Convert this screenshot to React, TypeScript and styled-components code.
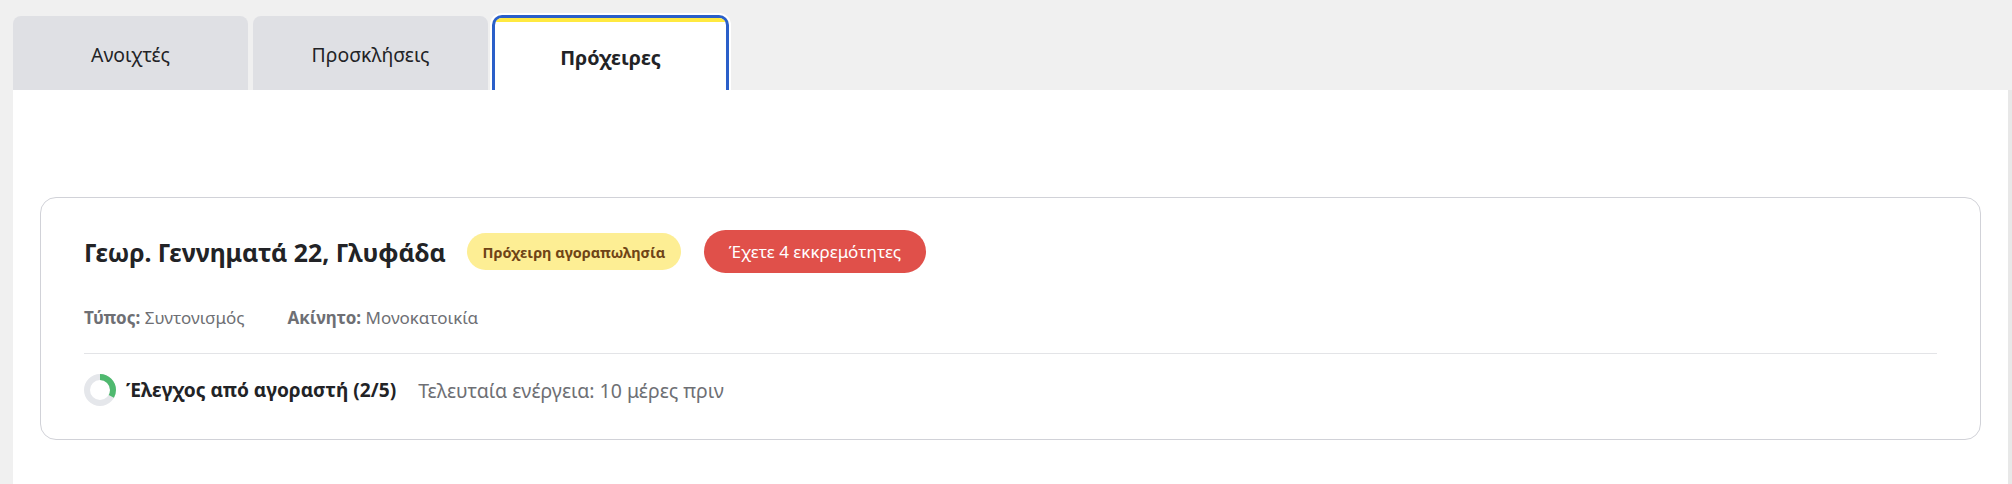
import React from 'react';
import styled, { createGlobalStyle } from 'styled-components';

const GlobalStyle = createGlobalStyle`
  html, body {
    margin: 0;
    padding: 0;
    background: #f0f0f0;
    font-family: "Noto Sans", "Open Sans", sans-serif;
    overflow: hidden;
  }
`;

const Page = styled.div`
  width: 2012px;
  height: 484px;
  padding-top: 16px;
  box-sizing: border-box;
  display: flex;
  flex-direction: column;
`;

const TabRow = styled.div`
  display: flex;
  align-items: flex-end;
  height: 74px;
  padding-left: 13px;
  gap: 5px;
`;

const Tab = styled.div<{ $active?: boolean }>`
  box-sizing: border-box;
  width: ${({ $active }) => ($active ? '237px' : '235px')};
  height: ${({ $active }) => ($active ? '75px' : '74px')};
  margin-left: ${({ $active }) => ($active ? '-1px' : '0')};
  display: flex;
  align-items: center;
  justify-content: center;
  border-radius: ${({ $active }) => ($active ? '10px 10px 0 0' : '8px 8px 0 0')};
  background: ${({ $active }) => ($active ? '#fff' : '#dfe0e4')};
  color: #222326;
  font-size: ${({ $active }) => ($active ? '19.7px' : '19.4px')};
  font-weight: ${({ $active }) => ($active ? 700 : 400)};
  border: ${({ $active }) => ($active ? '3px solid #2a5fc9' : 'none')};
  border-bottom: none;
  box-shadow: ${({ $active }) => ($active ? '0 0 0 2px #fff' : 'none')};
  position: relative;
  padding-top: ${({ $active }) => ($active ? '6px' : '2px')};
  overflow: hidden;
`;

const TabStripe = styled.span`
  position: absolute;
  top: 0;
  left: 0;
  right: 0;
  height: 4px;
  background: #ffe940;
`;

const Panel = styled.main`
  flex: 1;
  margin: 0 4px 0 13px;
  background: #fff;
  padding: 107px 27px 0;
  position: relative;
  box-shadow: 4px 0 0 #e8e8e8;
`;

const Card = styled.section`
  box-sizing: border-box;
  height: 243px;
  border: 1px solid #d1d2d8;
  border-radius: 16px;
  padding: 32px 43px 0 43px;
`;

const HeaderRow = styled.div`
  display: flex;
  align-items: center;
  height: 43px;
`;

const Title = styled.h2`
  margin: 0;
  font-size: 24.8px;
  line-height: 32px;
  font-weight: 700;
  color: #222326;
`;

const DraftBadge = styled.span`
  margin-left: 21px;
  height: 37px;
  width: 214px;
  display: flex;
  align-items: center;
  justify-content: center;
  border-radius: 19px;
  background: #fdee94;
  color: #6f4416;
  font-size: 14.5px;
  font-weight: 700;
`;

const PendingBadge = styled.span`
  margin-left: 23px;
  height: 43px;
  width: 222px;
  display: flex;
  align-items: center;
  justify-content: center;
  border-radius: 22px;
  background: #e0504a;
  color: #fff;
  font-size: 17px;
`;

const MetaRow = styled.div`
  display: flex;
  gap: 43px;
  margin-top: 32px;
  height: 24px;
  align-items: center;
  font-size: 17px;
  color: #6e6f74;
`;

const MetaItem = styled.span`
  b {
    font-weight: 700;
  }
`;

const Divider = styled.hr`
  margin: 24px 0 0;
  border: none;
  border-top: 1px solid #e3e4e7;
`;

const ProgressRow = styled.div`
  display: flex;
  align-items: center;
  margin-top: 20px;
  height: 32px;
`;

const ProgressLabel = styled.span`
  margin-left: 10px;
  font-size: 19.15px;
  font-weight: 700;
  color: #222326;
`;

const LastAction = styled.span`
  margin-left: 22px;
  font-size: 19.5px;
  color: #6e6f74;
`;

const Ring = ({ value }: { value: number }) => {
  const r = 13;
  const c = 2 * Math.PI * r;
  return (
    <svg width="32" height="32" viewBox="0 0 32 32">
      <circle cx="16" cy="16" r={r} fill="none" stroke="#e5e7eb" strokeWidth="6" />
      <circle
        cx="16"
        cy="16"
        r={r}
        fill="none"
        stroke="#4fb96f"
        strokeWidth="6"
        strokeDasharray={`${c * value} ${c}`}
        transform="rotate(-90 16 16)"
      />
    </svg>
  );
};

export default function App() {
  return (
    <>
      <GlobalStyle />
      <Page>
        <TabRow>
          <Tab>Ανοιχτές</Tab>
          <Tab>Προσκλήσεις</Tab>
          <Tab $active>
            <TabStripe />
            Πρόχειρες
          </Tab>
        </TabRow>
        <Panel>
          <Card>
            <HeaderRow>
              <Title>Γεωρ. Γεννηματά 22, Γλυφάδα</Title>
              <DraftBadge>Πρόχειρη αγοραπωλησία</DraftBadge>
              <PendingBadge>Έχετε 4 εκκρεμότητες</PendingBadge>
            </HeaderRow>
            <MetaRow>
              <MetaItem>
                <b>Τύπος:</b> Συντονισμός
              </MetaItem>
              <MetaItem>
                <b>Ακίνητο:</b> Μονοκατοικία
              </MetaItem>
            </MetaRow>
            <Divider />
            <ProgressRow>
              <Ring value={0.33} />
              <ProgressLabel>Έλεγχος από αγοραστή (2/5)</ProgressLabel>
              <LastAction>Τελευταία ενέργεια: 10 μέρες πριν</LastAction>
            </ProgressRow>
          </Card>
        </Panel>
      </Page>
    </>
  );
}
